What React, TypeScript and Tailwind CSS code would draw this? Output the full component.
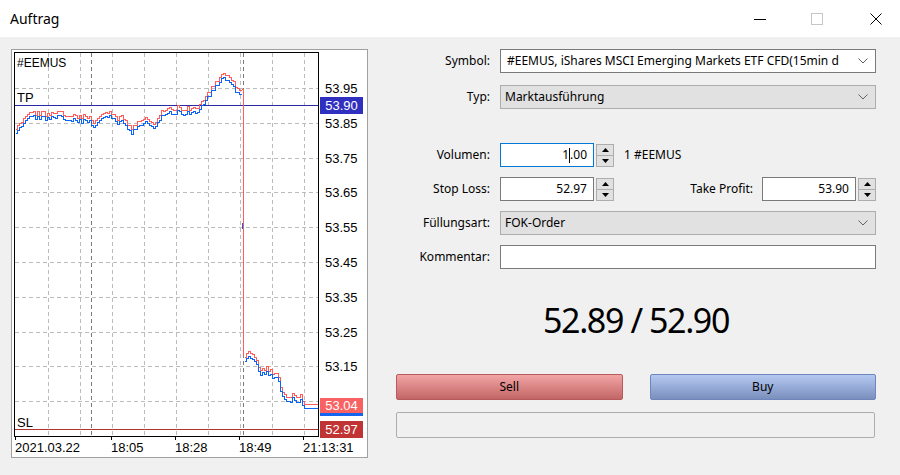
import React from 'react';

// deterministic noise for the tick line
const rnd = (i: number) => {
  const s = Math.sin(i * 127.1 + 311.7) * 43758.5453;
  return s - Math.floor(s);
};

const series = (keys: number[][], seed: number) => {
  const out: number[][] = [];
  const x0 = keys[0][0];
  const x1 = keys[keys.length - 1][0];
  for (let x = x0, i = 0; x <= x1; x += 2, i++) {
    let k = 0;
    while (k < keys.length - 2 && keys[k + 1][0] < x) k++;
    const [ax, ay] = keys[k];
    const [bx, by] = keys[k + 1];
    const t = bx === ax ? 0 : (x - ax) / (bx - ax);
    const amp = x >= 302 ? 0 : 2;
    out.push([x, Math.round(ay + (by - ay) * t + (rnd(i + seed) - 0.5) * 2 * amp)]);
  }
  return out;
};

const stepPath = (pts: number[][]) =>
  `M${pts[0][0] + 0.5} ${pts[0][1] + 0.5}` +
  pts
    .slice(1)
    .map((p) => `H${p[0] + 0.5}V${p[1] + 0.5}`)
    .join('');

const bidA = series(
  [
    [15, 132], [20, 125], [28, 115], [35, 117], [45, 118], [55, 117], [60, 114], [65, 122], [72, 120],
    [80, 121], [88, 120], [93, 128], [100, 118], [108, 116], [115, 122], [122, 122], [128, 128], [131, 133],
    [138, 124], [145, 122], [150, 124], [155, 128], [160, 117], [165, 112], [175, 112], [185, 113],
    [195, 112], [200, 108], [205, 100], [212, 90], [218, 84], [222, 77], [227, 80], [233, 88], [238, 95], [241, 93],
  ],
  3
);
const bidB = series(
  [
    [244, 360], [248, 357], [252, 357], [256, 365], [260, 375], [263, 372], [267, 373], [272, 378], [277, 377],
    [280, 390], [283, 398], [287, 404], [292, 398], [297, 403], [300, 400], [303, 408], [318, 408],
  ],
  90
);
const toAsk = (pts: number[][], seed: number) =>
  pts.map((p, i) => [p[0], p[1] - 4 - (p[0] < 302 && rnd(i + seed) > 0.65 ? 1 : 0)]);
const askA = toAsk(bidA, 500);
const askB = toAsk(bidB, 700);

const gridY = [88, 123, 158, 192, 227, 262, 297, 332, 366];
const gridX = [48, 80, 112, 144, 176, 208, 240, 272, 304];
const prices = ['53.95', '53.85', '53.75', '53.65', '53.55', '53.45', '53.35', '53.25', '53.15'];
const times: [number, string][] = [
  [15, '2021.03.22'],
  [111, '18:05'],
  [175, '18:28'],
  [239, '18:49'],
  [303, '21:13:31'],
];

const Chart = () => (
  <svg
    width={354}
    height={406}
    viewBox="12 50 354 406"
    className="block"
    fontFamily="'Liberation Sans', Arial, sans-serif"
    fontSize={13}
  >
    <g shapeRendering="crispEdges" fill="none">
      {[...gridY, 401].map((y) => (
        <path key={`h${y}`} d={`M15 ${y + 0.5}H318`} stroke="#bcbcbc" strokeDasharray="4 3" />
      ))}
      {gridX.map((x) => (
        <path key={`v${x}`} d={`M${x + 0.5} 53V436`} stroke="#bcbcbc" strokeDasharray="4 3" />
      ))}
      <path d="M91.5 53V436" stroke="#7a7a7a" strokeDasharray="4 3" />
      <path d="M243.5 53V436" stroke="#7a7a7a" strokeDasharray="4 3" />

      {/* take profit / stop loss */}
      <path d="M15 105.5H318" stroke="#2a2aa8" />
      <path d="M15 429.5H318" stroke="#b03434" />

      <path d={stepPath(askA)} stroke="#ff5c5c" />
      <path d={stepPath(askB)} stroke="#ff5c5c" />
      <path d={stepPath(bidA)} stroke="#0a64f5" />
      <path d={stepPath(bidB)} stroke="#0a64f5" />
      <path d={`M241.5 ${askA[askA.length - 1][1] + 0.5}H243.5V356`} stroke="#ff5c5c" />
      <path d="M242.5 223V229" stroke="#0a64f5" />

      <rect x={14.5} y={52.5} width={304} height={384} stroke="#000" />
      {times.map(([x]) => (
        <path key={`t${x}`} d={`M${x + 0.5} 437V440`} stroke="#000" />
      ))}

      <rect x={320} y={97} width={43} height={17} fill="#3030c0" />
      <rect x={320} y={398} width={43} height={16} fill="#f86262" />
      <rect x={320} y={413} width={43} height={3} fill="#1464f0" />
      <rect x={320} y={421} width={43} height={17} fill="#c03434" />
    </g>

    <text x={17} y={67} fontSize={12}>#EEMUS</text>
    <text x={17} y={102}>TP</text>
    <text x={17} y={427}>SL</text>

    {prices.map((p, i) => (
      <text key={p} x={325} y={gridY[i] + 5}>{p}</text>
    ))}
    {times.map(([x, t]) => (
      <text key={t} x={x} y={452}>{t}</text>
    ))}

    <text x={341.5} y={110} fill="#fff" textAnchor="middle">53.90</text>
    <text x={341.5} y={410} fill="#fff" textAnchor="middle">53.04</text>
    <text x={341.5} y={434} fill="#fff" textAnchor="middle">52.97</text>
  </svg>
);

const Chevron = () => (
  <svg width="10" height="6" viewBox="0 0 10 6" className="shrink-0">
    <polyline points="0.5,0.5 5,5 9.5,0.5" fill="none" stroke="#606060" />
  </svg>
);

const Spinner = () => (
  <div className="ml-[2px] flex h-[23px] w-[18px] flex-col">
    <div className="flex h-[12px] items-center justify-center border border-[#adadad] bg-[#e1e1e1]">
      <svg width="7" height="4" viewBox="0 0 7 4"><polygon points="3.5,0 7,4 0,4" fill="#000" /></svg>
    </div>
    <div className="flex h-[11px] items-center justify-center border-x border-b border-[#adadad] bg-[#e1e1e1]">
      <svg width="7" height="4" viewBox="0 0 7 4"><polygon points="0,0 7,0 3.5,4" fill="#000" /></svg>
    </div>
  </div>
);

const Label = ({ children }: { children: React.ReactNode }) => (
  <div className="w-[95px] shrink-0 pr-[1px] text-right">{children}</div>
);

const NumBox = ({ children, focused }: { children: React.ReactNode; focused?: boolean }) => (
  <div
    className={`flex h-[24px] w-[94px] items-center justify-end border bg-white pr-[6px] ${
      focused ? 'border-[#0078d7]' : 'border-[#7a7a7a]'
    }`}
  >
    {children}
  </div>
);

export default function App() {
  return (
    <div className="h-[475px] w-[900px] overflow-hidden bg-[#f0f0f0] font-['Noto_Sans',sans-serif] text-[12px] text-black">
      {/* Title bar */}
      <div className="flex h-[37px] items-center bg-white pl-[10px]">
        <span className="text-[14px]">Auftrag</span>
        <div className="ml-auto flex items-center">
          <svg width="12" height="12" viewBox="0 0 12 12" className="mr-[45px]">
            <line x1="0" x2="12" y1="6.5" y2="6.5" stroke="#000" />
          </svg>
          <svg width="12" height="12" viewBox="0 0 12 12" className="mr-[47px]">
            <rect x="0.5" y="0.5" width="11" height="11" fill="none" stroke="#c6c6c6" />
          </svg>
          <svg width="12" height="12" viewBox="0 0 12 12" className="mr-[18px]">
            <path d="M0.5 0.5L11.5 11.5M11.5 0.5L0.5 11.5" stroke="#000" />
          </svg>
        </div>
      </div>

      <div className="flex pl-[11px] pt-[12px]">
        {/* Chart */}
        <div className="h-[409px] w-[357px] border border-[#a0a0a0] bg-white">
          <Chart />
        </div>

        {/* Order form */}
        <div className="ml-[28px] flex w-[480px] flex-col">
          <div className="flex h-[24px] items-center">
            <Label>Symbol:</Label>
            <div className="ml-[9px] flex h-full min-w-0 flex-1 items-center justify-between border border-[#7a7a7a] bg-white pl-[6px] pr-[7px]">
              <span className="whitespace-nowrap">#EEMUS, iShares MSCI Emerging Markets ETF CFD(15min d</span>
              <Chevron />
            </div>
          </div>

          <div className="mt-[12px] flex h-[24px] items-center">
            <Label>Typ:</Label>
            <div className="ml-[9px] flex h-full flex-1 items-center justify-between border border-[#adadad] bg-[#e1e1e1] pl-[4px] pr-[7px]">
              <span>Marktausführung</span>
              <Chevron />
            </div>
          </div>

          <div className="mt-[34px] flex h-[24px] items-center">
            <Label>Volumen:</Label>
            <div className="ml-[9px] flex items-center">
              <NumBox focused>
                <span>1</span>
                <span className="inline-block h-[15px] w-px bg-black" />
                <span>.00</span>
              </NumBox>
              <Spinner />
              <span className="ml-[10px]">1 #EEMUS</span>
            </div>
          </div>

          <div className="mt-[10px] flex h-[24px] items-center">
            <Label>Stop Loss:</Label>
            <div className="ml-[9px] flex items-center">
              <NumBox>52.97</NumBox>
              <Spinner />
            </div>
            <div className="ml-auto flex items-center">
              <span className="mr-[9px]">Take Profit:</span>
              <NumBox>53.90</NumBox>
              <Spinner />
            </div>
          </div>

          <div className="mt-[10px] flex h-[24px] items-center">
            <Label>Füllungsart:</Label>
            <div className="ml-[9px] flex h-full flex-1 items-center justify-between border border-[#adadad] bg-[#e1e1e1] pl-[4px] pr-[7px]">
              <span>FOK-Order</span>
              <Chevron />
            </div>
          </div>

          <div className="mt-[10px] flex h-[24px] items-center">
            <Label>Kommentar:</Label>
            <div className="ml-[9px] h-full flex-1 border border-[#7a7a7a] bg-white" />
          </div>

          <div className="mt-[33px] text-center text-[34px] leading-[37px] tracking-[-1.4px]">52.89 / 52.90</div>

          <div className="mt-[35px] grid h-[26px] grid-cols-2 gap-[27px]">
            <button className="flex items-center justify-center rounded-[2px] border border-[#b85a5a] bg-linear-to-b from-[#f2a5a5] to-[#c26666]">
              Sell
            </button>
            <button className="flex items-center justify-center rounded-[2px] border border-[#6e86bc] bg-linear-to-b from-[#b4c9f1] to-[#7b8fbd]">
              Buy
            </button>
          </div>

          <div className="mt-[12px] h-[26px] w-[479px] rounded-[2px] border border-[#adadad]" />
        </div>
      </div>
    </div>
  );
}
